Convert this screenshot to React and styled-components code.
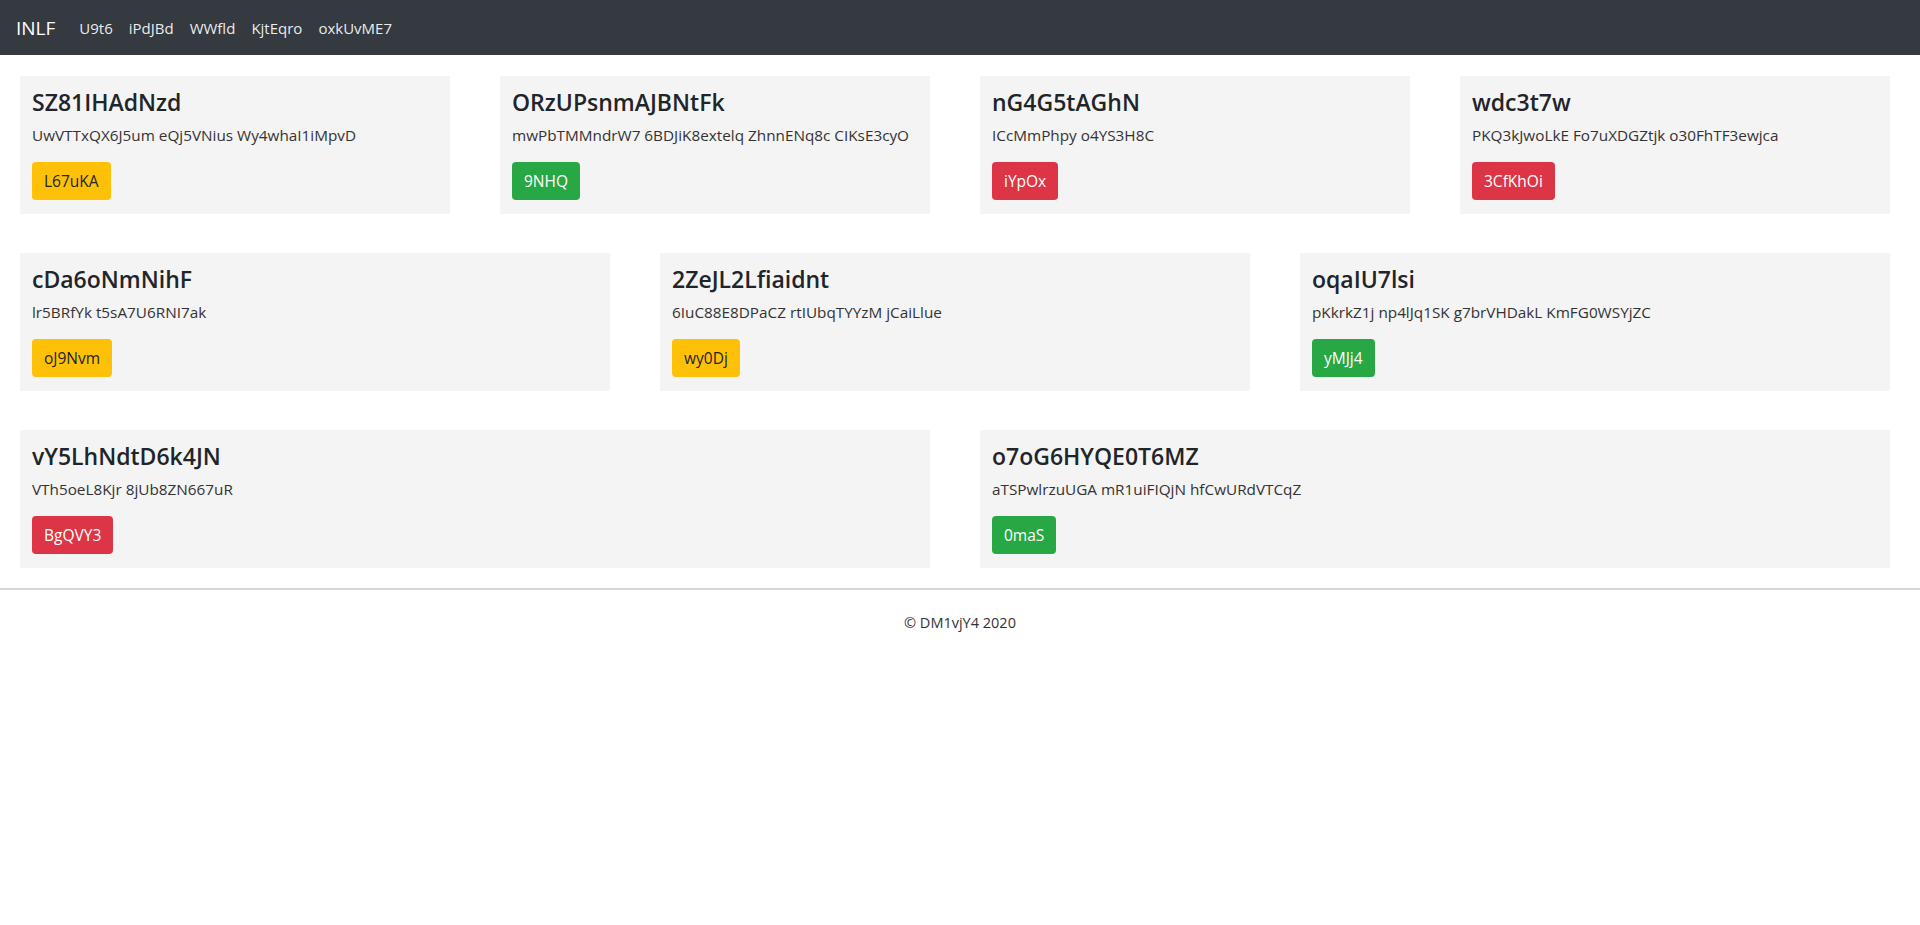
import React from 'react';
import styled, { createGlobalStyle } from 'styled-components';

const GlobalStyle = createGlobalStyle`
  body {
    margin: 0;
    font-family: "Open Sans", "Noto Sans", sans-serif;
    color: #212529;
    background: #fff;
  }
`;

const NavBar = styled.nav`
  display: flex;
  align-items: center;
  height: 55px;
  padding: 0 16px 0 16px;
  background-color: #343a40;
`;

const Brand = styled.a`
  color: #fff;
  font-size: 19px;
  margin-right: 16px;
  text-decoration: none;
`;

const NavLink = styled.a`
  color: rgba(255, 255, 255, 0.92);
  font-size: 15px;
  font-weight: 500;
  padding: 8px;
  text-decoration: none;
`;

const Main = styled.main`
  display: flex;
  flex-direction: column;
  gap: 39px;
  padding: 21px 30px 20px 20px;
`;

const Row = styled.div`
  display: grid;
  grid-template-columns: repeat(${(p) => p.cols}, 1fr);
  column-gap: 50px;
`;

const Card = styled.div`
  background-color: #f4f4f4;
  padding: 12px;
  height: 138px;
  box-sizing: border-box;
`;

const Title = styled.h4`
  margin: 0 0 8px;
  font-size: 23px;
  font-weight: 600;
  line-height: 28px;
  color: #212529;
`;

const Text = styled.p`
  margin: 1px 0 16px;
  font-size: 15.3px;
  line-height: 22px;
  color: #333;
`;

const colors = {
  warning: { bg: '#ffc107', fg: '#212529' },
  success: { bg: '#28a745', fg: '#fff' },
  danger: { bg: '#dc3545', fg: '#fff' },
};

const Button = styled.button`
  font-family: inherit;
  font-size: 15.5px;
  line-height: 24px;
  padding: 7px 12px;
  border: none;
  border-radius: 4px;
  background-color: ${(p) => colors[p.variant].bg};
  color: ${(p) => colors[p.variant].fg};
`;

const Footer = styled.footer`
  border-top: 2px solid #d6d6d6;
  text-align: center;
  padding-top: 23px;
  font-size: 14.5px;
  color: #333;
`;

const rows = [
  [
    { t: 'SZ81IHAdNzd', s: 'UwVTTxQX6J5um eQj5VNius Wy4whaI1iMpvD', b: 'L67uKA', v: 'warning' },
    { t: 'ORzUPsnmAJBNtFk', s: 'mwPbTMMndrW7 6BDJiK8extelq ZhnnENq8c CIKsE3cyO', b: '9NHQ', v: 'success' },
    { t: 'nG4G5tAGhN', s: 'ICcMmPhpy o4YS3H8C', b: 'iYpOx', v: 'danger' },
    { t: 'wdc3t7w', s: 'PKQ3kJwoLkE Fo7uXDGZtjk o30FhTF3ewjca', b: '3CfKhOi', v: 'danger' },
  ],
  [
    { t: 'cDa6oNmNihF', s: 'lr5BRfYk t5sA7U6RNI7ak', b: 'oJ9Nvm', v: 'warning' },
    { t: '2ZeJL2Lfiaidnt', s: '6IuC88E8DPaCZ rtIUbqTYYzM jCaiLlue', b: 'wy0Dj', v: 'warning' },
    { t: 'oqaIU7lsi', s: 'pKkrkZ1j np4lJq1SK g7brVHDakL KmFG0WSYjZC', b: 'yMJj4', v: 'success' },
  ],
  [
    { t: 'vY5LhNdtD6k4JN', s: 'VTh5oeL8Kjr 8jUb8ZN667uR', b: 'BgQVY3', v: 'danger' },
    { t: 'o7oG6HYQE0T6MZ', s: 'aTSPwlrzuUGA mR1uiFIQjN hfCwURdVTCqZ', b: '0maS', v: 'success' },
  ],
];

const links = ['U9t6', 'iPdJBd', 'WWfld', 'KjtEqro', 'oxkUvME7'];

export default function App() {
  return (
    <>
      <GlobalStyle />
      <NavBar>
        <Brand href="#">INLF</Brand>
        {links.map((l) => (
          <NavLink key={l} href="#">{l}</NavLink>
        ))}
      </NavBar>
      <Main>
        {rows.map((row, i) => (
          <Row key={i} cols={row.length}>
            {row.map((c) => (
              <Card key={c.t}>
                <Title>{c.t}</Title>
                <Text>{c.s}</Text>
                <Button variant={c.v}>{c.b}</Button>
              </Card>
            ))}
          </Row>
        ))}
      </Main>
      <Footer>© DM1vjY4 2020</Footer>
    </>
  );
}
